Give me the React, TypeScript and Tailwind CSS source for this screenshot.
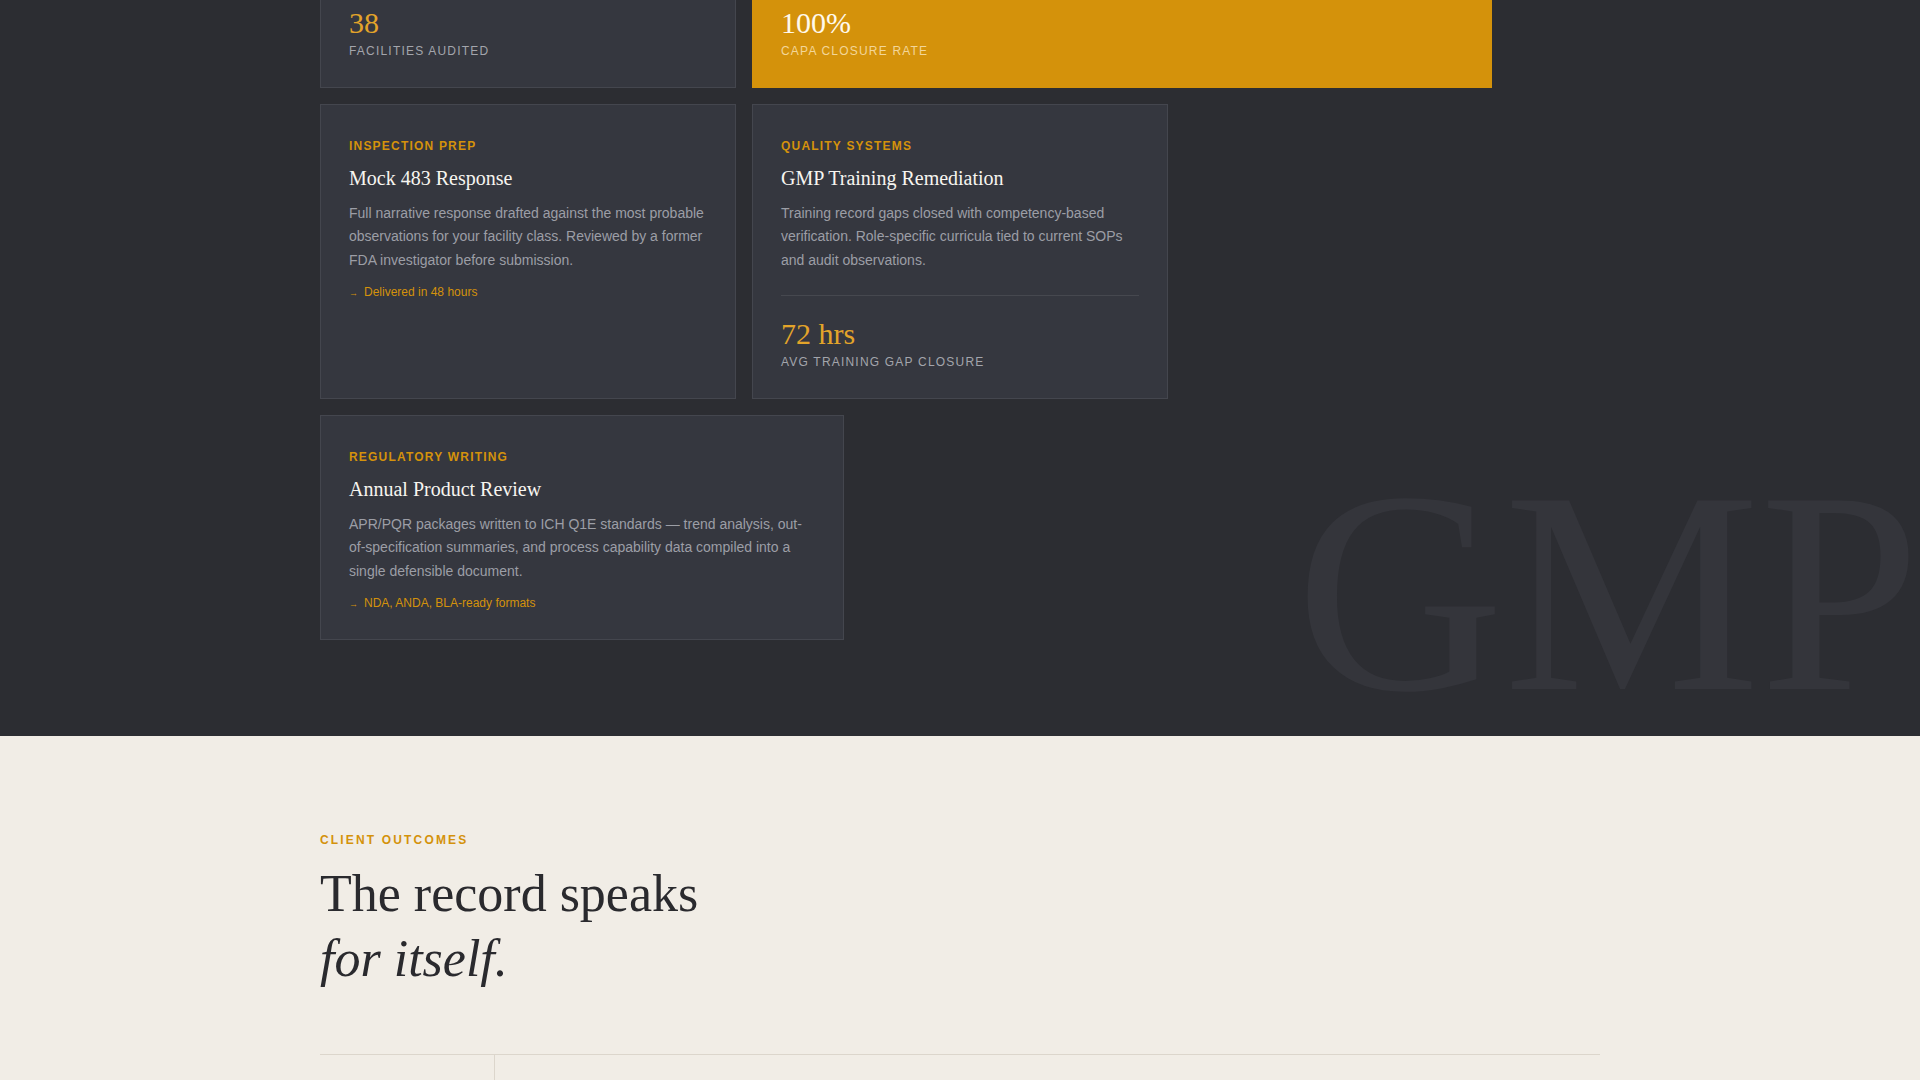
import React from 'react';

const sans = "font-['Liberation_Sans',Arial,sans-serif]";
const serif = "font-['Liberation_Serif','Times_New_Roman',serif]";

type Service = {
  tag: string;
  title: string;
  body: string;
  note?: string;
  stat?: { value: string; label: string };
  span: string;
};

const services: Service[] = [
  {
    tag: 'Inspection Prep',
    title: 'Mock 483 Response',
    body: 'Full narrative response drafted against the most probable observations for your facility class. Reviewed by a former FDA investigator before submission.',
    note: 'Delivered in 48 hours',
    span: 'col-span-4',
  },
  {
    tag: 'Quality Systems',
    title: 'GMP Training Remediation',
    body: 'Training record gaps closed with competency-based verification. Role-specific curricula tied to current SOPs and audit observations.',
    stat: { value: '72 hrs', label: 'Avg training gap closure' },
    span: 'col-span-4',
  },
  {
    tag: 'Regulatory Writing',
    title: 'Annual Product Review',
    body: 'APR/PQR packages written to ICH Q1E standards — trend analysis, out-of-specification summaries, and process capability data compiled into a single defensible document.',
    note: 'NDA, ANDA, BLA-ready formats',
    span: 'col-span-5',
  },
];

function StatCard({ value, label, accent, span }: { value: string; label: string; accent?: boolean; span: string }) {
  return (
    <div
      className={`${span} px-7 pt-8 pb-[27px] border ${
        accent ? 'bg-[#d4920b] border-[#d4920b]' : 'bg-[#35373f] border-[#44464e]'
      }`}
    >
      <div className={`${serif} text-[30px] leading-none ${accent ? 'text-[#fff9ec]' : 'text-[#e3a42a]'}`}>{value}</div>
      <div
        className={`${sans} mt-1 text-xs leading-[18px] uppercase tracking-[0.1em] ${
          accent ? 'text-[#f3d699]' : 'text-[#a3a5ac]'
        }`}
      >
        {label}
      </div>
    </div>
  );
}

function ServiceCard({ s }: { s: Service }) {
  return (
    <div className={`${s.span} bg-[#35373f] border border-[#44464e] px-7 pt-8 pb-[27px]`}>
      <div className={`${sans} text-xs leading-[18px] font-bold uppercase tracking-[0.1em] text-[#d4920b]`}>{s.tag}</div>
      <h3 className={`${serif} mt-[9px] text-[20px] leading-[28px] text-[#f7f5f0]`}>{s.title}</h3>
      <p className={`${sans} mt-[10px] text-sm leading-[1.667] text-[#9c9ea6]`}>{s.body}</p>
      {s.note && (
        <div className={`${sans} mt-[11px] flex items-center text-xs leading-[18px] text-[#d4920b]`}>
          <span className="mr-1.5 text-[9px] leading-none pt-1">→</span>
          {s.note}
        </div>
      )}
      {s.stat && (
        <div className="mt-[23px] pt-[23px] border-t border-[#46484f]">
          <div className={`${serif} text-[30px] leading-none text-[#e3a42a]`}>{s.stat.value}</div>
          <div className={`${sans} mt-1 text-xs leading-[18px] uppercase tracking-[0.1em] text-[#a3a5ac]`}>
            {s.stat.label}
          </div>
        </div>
      )}
    </div>
  );
}

export default function App() {
  return (
    <div className={`${sans} min-h-screen bg-[#f1ede6]`}>
      {/* services bento */}
      <section className="relative overflow-hidden bg-[#2c2d32] pb-24">
        <div
          aria-hidden
          className={`${serif} pointer-events-none select-none absolute bottom-0 right-0 text-[288px] leading-none text-[#34353b]`}
        >
          GMP
        </div>
        <div className="relative mx-auto max-w-[1280px] -mt-[25px] grid grid-cols-12 gap-4">
          <StatCard value="38" label="Facilities audited" span="col-span-4" />
          <StatCard value="100%" label="CAPA closure rate" accent span="col-span-7" />
          {services.map((s) => (
            <ServiceCard key={s.title} s={s} />
          ))}
        </div>
      </section>

      {/* outcomes */}
      <section className="bg-[#f1ede6] pt-[97px] pb-16">
        <div className="mx-auto max-w-[1280px]">
          <div className={`${sans} text-xs leading-[15px] font-bold uppercase tracking-[0.18em] text-[#d4920b]`}>
            Client Outcomes
          </div>
          <h2 className={`${serif} mt-[13px] text-[52px] leading-[1.25] font-normal text-[#2a2a2e]`}>
            The record speaks
            <br />
            <em className="italic">for itself.</em>
          </h2>
          <div className="mt-[63px] grid grid-cols-[175px_1fr] border-t border-[#dcd6cc]">
            <div className="h-40 border-r border-[#dcd6cc]" />
            <div className="h-40" />
          </div>
        </div>
      </section>
    </div>
  );
}
